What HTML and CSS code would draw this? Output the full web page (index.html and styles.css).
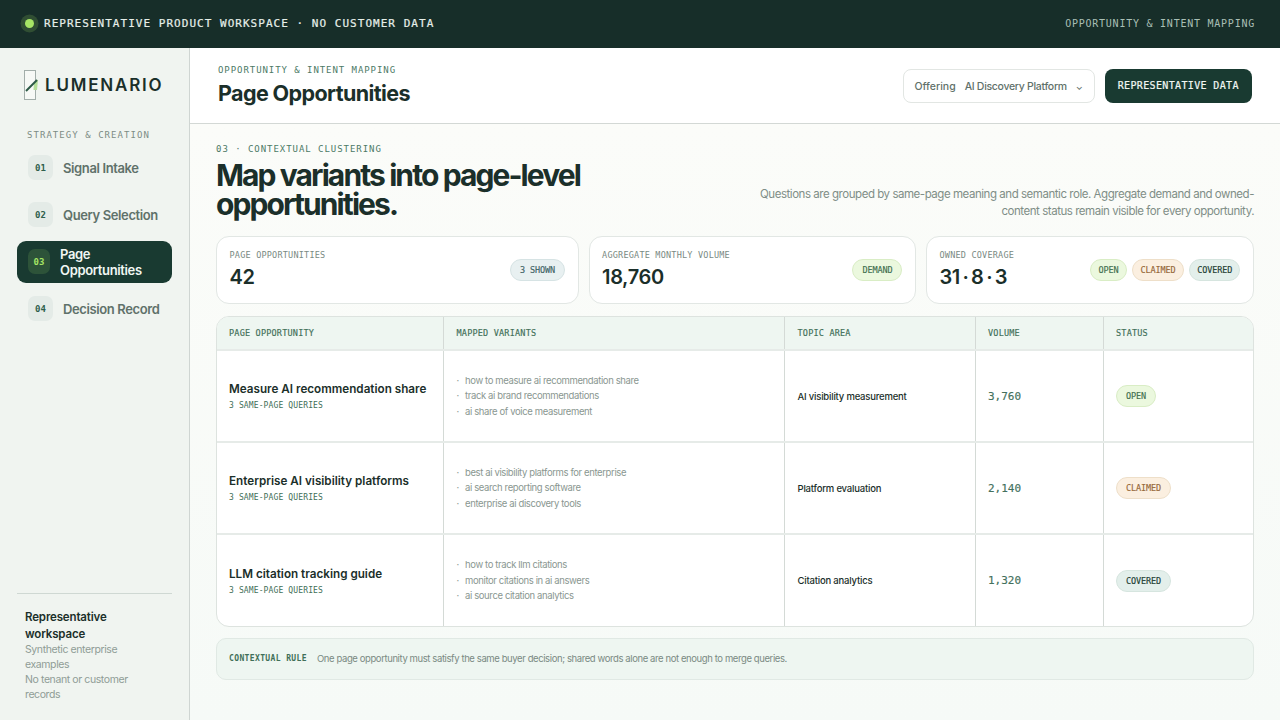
FILE: index.html
```html
<!DOCTYPE html>
<html lang="en">
<head>
<meta charset="utf-8">
<title>Page Opportunities</title>
<link rel="stylesheet" href="styles.css">
</head>
<body>
<div class="topbar">
  <div class="top-left"><span class="dot"></span><span>REPRESENTATIVE PRODUCT WORKSPACE · NO CUSTOMER DATA</span></div>
  <div class="top-right">OPPORTUNITY &amp; INTENT MAPPING</div>
</div>
<div class="shell">
  <aside class="sidebar">
    <div class="logo">
      <svg class="logo-mark" width="14" height="30" viewBox="0 0 14 30"><rect x="0.5" y="0.5" width="11" height="29" fill="#f7f9f6" stroke="#a3aeaa"/><path d="M14 9.5 L10 13 L9.5 20 L13 20Z" fill="#b5e09a"/><path d="M2 21 L13 10" stroke="#2c5a46" stroke-width="2" fill="none"/></svg>
      <span class="logo-text">LUMENARIO</span>
    </div>
    <div class="nav-label">STRATEGY &amp; CREATION</div>
    <nav class="nav">
      <div class="nav-item"><span class="num">01</span><span>Signal Intake</span></div>
      <div class="nav-item"><span class="num">02</span><span>Query Selection</span></div>
      <div class="nav-item active"><span class="num">03</span><span>Page Opportunities</span></div>
      <div class="nav-item"><span class="num">04</span><span>Decision Record</span></div>
    </nav>
    <div class="side-foot">
      <strong>Representative workspace</strong>
      <p>Synthetic enterprise examples</p>
      <p>No tenant or customer records</p>
    </div>
  </aside>
  <main class="main">
    <header class="header">
      <div>
        <div class="eyebrow">OPPORTUNITY &amp; INTENT MAPPING</div>
        <h1>Page Opportunities</h1>
      </div>
      <div class="header-actions">
        <div class="select"><span>Offering</span><span class="select-val">AI Discovery Platform</span><span class="chev">⌄</span></div>
        <div class="btn">REPRESENTATIVE DATA</div>
      </div>
    </header>
    <section class="content">
      <div class="hero">
        <div>
          <div class="step">03 · CONTEXTUAL CLUSTERING</div>
          <h2>Map variants into page-level opportunities.</h2>
        </div>
        <p class="hero-note">Questions are grouped by same-page meaning and semantic role. Aggregate demand and owned-content status remain visible for every opportunity.</p>
      </div>
      <div class="stats">
        <div class="stat">
          <div><div class="stat-label">PAGE OPPORTUNITIES</div><div class="stat-value">42</div></div>
          <div class="pills"><span class="pill blue">3 SHOWN</span></div>
        </div>
        <div class="stat">
          <div><div class="stat-label">AGGREGATE MONTHLY VOLUME</div><div class="stat-value">18,760</div></div>
          <div class="pills"><span class="pill green">DEMAND</span></div>
        </div>
        <div class="stat">
          <div><div class="stat-label">OWNED COVERAGE</div><div class="stat-value">31 · 8 · 3</div></div>
          <div class="pills tight"><span class="pill green">OPEN</span><span class="pill orange">CLAIMED</span><span class="pill teal">COVERED</span></div>
        </div>
      </div>
      <div class="table">
        <div class="row head">
          <div class="cell">PAGE OPPORTUNITY</div><div class="cell">MAPPED VARIANTS</div><div class="cell">TOPIC AREA</div><div class="cell">VOLUME</div><div class="cell">STATUS</div>
        </div>
        <div class="row">
          <div class="cell"><div class="title">Measure AI recommendation share</div><div class="sub">3 SAME-PAGE QUERIES</div></div>
          <div class="cell"><ul><li>how to measure ai recommendation share</li><li>track ai brand recommendations</li><li>ai share of voice measurement</li></ul></div>
          <div class="cell topic">AI visibility measurement</div>
          <div class="cell vol">3,760</div>
          <div class="cell"><span class="pill green">OPEN</span></div>
        </div>
        <div class="row">
          <div class="cell"><div class="title">Enterprise AI visibility platforms</div><div class="sub">3 SAME-PAGE QUERIES</div></div>
          <div class="cell"><ul><li>best ai visibility platforms for enterprise</li><li>ai search reporting software</li><li>enterprise ai discovery tools</li></ul></div>
          <div class="cell topic">Platform evaluation</div>
          <div class="cell vol">2,140</div>
          <div class="cell"><span class="pill orange">CLAIMED</span></div>
        </div>
        <div class="row">
          <div class="cell"><div class="title">LLM citation tracking guide</div><div class="sub">3 SAME-PAGE QUERIES</div></div>
          <div class="cell"><ul><li>how to track llm citations</li><li>monitor citations in ai answers</li><li>ai source citation analytics</li></ul></div>
          <div class="cell topic">Citation analytics</div>
          <div class="cell vol">1,320</div>
          <div class="cell"><span class="pill teal">COVERED</span></div>
        </div>
      </div>
      <div class="rule"><span class="rule-label">CONTEXTUAL RULE</span><span class="rule-text">One page opportunity must satisfy the same buyer decision; shared words alone are not enough to merge queries.</span></div>
    </section>
  </main>
</div>
</body>
</html>
```
FILE: styles.css
```css
* { box-sizing: border-box; }
html, body { margin: 0; height: 100%; }
body {
  width: 1280px; height: 720px; overflow: hidden;
  font-family: Inter, "Noto Sans", sans-serif;
  color: #1b2f2a; background: #f7faf6;
}
.topbar {
  height: 48px; background: #172e29; color: #e6efe9;
  display: flex; align-items: center; justify-content: space-between;
  padding: 0 25px 2px 21px;
  font-family: "DejaVu Sans Mono", monospace; font-size: 11px;
}
.top-left { display: flex; align-items: center; gap: 10px; letter-spacing: 1.03px; -webkit-text-stroke: .2px; }
.dot { width: 9px; height: 9px; border-radius: 50%; background: #a6e565; box-shadow: 0 0 0 4.5px rgba(166,229,101,.18); margin-left: 4px; }
.top-right { color: #a9bfb5; letter-spacing: .76px; font-size: 10px; }
.shell { display: flex; height: 672px; }
.sidebar {
  width: 190px; flex: none; background: #f0f4f0; border-right: 1px solid #cfd5d2;
  padding: 22px 17px 17px; display: flex; flex-direction: column;
}
.logo { display: flex; align-items: center; gap: 7px; padding-left: 7px; height: 30px; }
.logo-mark { flex: none; }
.logo-text { font-size: 17px; font-weight: 600; letter-spacing: 1.8px; color: #1b2f2a; }
.nav-label {
  margin: 30px 0 0 10px; font-family: "DejaVu Sans Mono", monospace;
  font-size: 9px; letter-spacing: 1.05px; color: #7d8c85;
}
.nav { display: flex; flex-direction: column; margin-top: 15px; }
.nav-item {
  display: flex; align-items: center; gap: 10px; padding: 0 11px;
  height: 25px; margin: 0 0 22px; font-size: 13px; font-weight: 600; letter-spacing: -.38px; color: #5f716a; white-space: nowrap;
}
.nav-item:nth-child(2) { margin-bottom: 13.5px; }
.nav-item .num {
  width: 25px; height: 25px; flex: none; border-radius: 7px; background: #e4ebe7;
  display: flex; align-items: center; justify-content: center; letter-spacing: 0;
  font-family: "DejaVu Sans Mono", monospace; font-size: 9px; color: #2f5f4c;
}
.nav-item.active {
  height: 42px; background: #193a31; color: #f1f7f3; border-radius: 9px; margin-bottom: 13.5px;
  line-height: 16px; gap: 10px; padding-right: 20px; white-space: normal; letter-spacing: -.35px;
}
.nav-item.active .num { width: 22px; height: 25px; background: #2d5339; color: #a6e565; }
.side-foot {
  margin-top: auto; border-top: 1px solid #cfd8d3; padding: 15px 30px 0 8px;
  font-size: 10.5px; letter-spacing: -.4px; line-height: 15px; color: #8f9c96; height: 110px;
}
.side-foot strong { display: block; font-size: 11.5px; line-height: 16.5px; letter-spacing: -.15px; color: #1b2f2a; font-weight: 600; }
.side-foot p { margin: 0; }
.main { flex: 1; display: flex; flex-direction: column; min-width: 0; }
.header {
  height: 76px; background: #fff; border-bottom: 1px solid #d3d8d5; flex: none;
  display: flex; align-items: center; justify-content: space-between;
  padding: 0 28px;
}
.eyebrow {
  font-family: "DejaVu Sans Mono", monospace; font-size: 9px; letter-spacing: .94px; color: #4c7a66;
}
h1 { margin: 5px 0 0; font-size: 21.5px; line-height: 26px; font-weight: 700; letter-spacing: -.6px; color: #1b2f2a; }
.header-actions { display: flex; align-items: center; gap: 9.5px; }
.select {
  width: 192.5px; height: 34px; border: 1.5px solid #e2e6e3; border-radius: 8px; background: #fff;
  display: flex; align-items: center; padding: 1px 11px 0; font-size: 10.5px; font-weight: 500; color: #5f716a;
}
.select-val { margin-left: 9px; white-space: nowrap; letter-spacing: -.3px; }
.chev { margin-left: 9px; font-size: 9px; }
.btn {
  width: 147.5px; height: 34px; border-radius: 8px; background: #193a31; color: #f1f7f3;
  display: flex; align-items: center; justify-content: center;
  font-family: "DejaVu Sans Mono", monospace; font-size: 10px; letter-spacing: .36px; -webkit-text-stroke: .2px;
}
.content {
  flex: 1; padding: 19px 26px 0;
  background: linear-gradient(#fbfcf9, #f6faf7);
  display: flex; flex-direction: column;
}
.hero { display: flex; justify-content: space-between; align-items: flex-end; }
.step { font-family: "DejaVu Sans Mono", monospace; font-size: 9px; letter-spacing: .96px; color: #4c7a66; line-height: 12px; }
h2 { margin: 6px 0 0; width: 400px; font-size: 30px; line-height: 29px; font-weight: 700; letter-spacing: -1.9px; color: #1b2f2a; }
.hero-note { margin: 0 0 -1.5px; width: 510px; text-align: right; font-size: 11.5px; letter-spacing: -.46px; line-height: 17.3px; color: #7f8e87; font-weight: 400; }
.stats { display: grid; grid-template-columns: 362.6px 327.4px 328px; gap: 10px; margin-top: 17px; }
.stat {
  height: 67.5px; background: #fff; border: 1.5px solid #e2e7e4; border-radius: 13px;
  display: flex; align-items: center; justify-content: space-between; padding: 0 12.5px;
}
.stat-label { font-family: "DejaVu Sans Mono", monospace; font-size: 8.5px; letter-spacing: .21px; color: #7a8a83; line-height: 11px; margin-top: -1px; }
.stat-value { font-size: 20px; line-height: 24px; font-weight: 600; margin-top: 4px; letter-spacing: -.4px; word-spacing: -2px; color: #1b2f2a; }
.pills { display: flex; gap: 5px; }
.pills.tight { gap: 5.5px; }
.pill {
  display: inline-flex; align-items: center; height: 22px; padding: 0 9px; border-radius: 11px; white-space: nowrap;
  font-family: "DejaVu Sans Mono", monospace; font-size: 8.5px; letter-spacing: -.12px; border: 1px solid; -webkit-text-stroke: .15px;
}
.tight .pill { padding: 0 7.2px; }
.pill.blue { background: #e8f0f1; border-color: #d6e3e4; color: #3f6367; }
.pill.green { background: #ebf8de; border-color: #d9edc5; color: #3f6f4f; }
.pill.orange { background: #fbefe0; border-color: #eedfc9; color: #96683a; }
.pill.teal { background: #e3efeb; border-color: #d6e5df; color: #1d3d33; }
.table {
  margin-top: 12.5px; background: #fff; border: 1.5px solid #dde3df; border-radius: 13px; overflow: hidden;
}
.row {
  display: grid; grid-template-columns: 227px 341px 190.5px 128px 1fr;
  height: 92px; border-top: 2px solid #e6ebe8;
}
.row:last-child { height: 93px; }
.row.head { height: 32px; background: #eef6f1; border-top: 0; }
.cell {
  padding: 0 12.5px; display: flex; flex-direction: column; justify-content: center; align-items: flex-start;
  border-right: 1px solid #d4dad6; min-width: 0;
}
.row .cell:first-child { padding-left: 12px; }
.cell:last-child { border-right: 0; }
.row.head .cell {
  font-family: "DejaVu Sans Mono", monospace; font-size: 8.5px; letter-spacing: .2px; color: #3f6f58; -webkit-text-stroke: .15px;
}
.title { font-size: 11.7px; line-height: 15px; font-weight: 600; color: #1b2f2a; white-space: nowrap; margin-top: 1px; }
.sub { font-family: "DejaVu Sans Mono", monospace; font-size: 8px; letter-spacing: .13px; color: #3f6f58; margin-top: 3px; line-height: 11px; }
ul { list-style: none; margin: 0; padding: 0; }
li { font-size: 9.5px; letter-spacing: -.38px; line-height: 15.4px; color: #8a9791; white-space: nowrap; padding-left: 8.5px; position: relative; }
li::before { content: "·"; position: absolute; left: 0; top: 0; }
.topic { font-size: 9.5px; font-weight: 500; letter-spacing: -.2px; color: #1b2f2a; white-space: nowrap; }
.vol { font-family: "DejaVu Sans Mono", monospace; font-size: 11px; color: #43705c; -webkit-text-stroke: .15px; }
.rule {
  margin-top: 10.5px; height: 42px; background: #eef6f1; border: 1.5px solid #e0e9e4; border-radius: 10px;
  display: flex; align-items: center; gap: 10px; padding: 0 12px; font-size: 9.5px; color: #7a8a83;
}
.rule-text { letter-spacing: -.4px; }
.rule-label { font-family: "DejaVu Sans Mono", monospace; font-size: 8px; letter-spacing: .38px; font-weight: 700; color: #3f6f58; }
```
